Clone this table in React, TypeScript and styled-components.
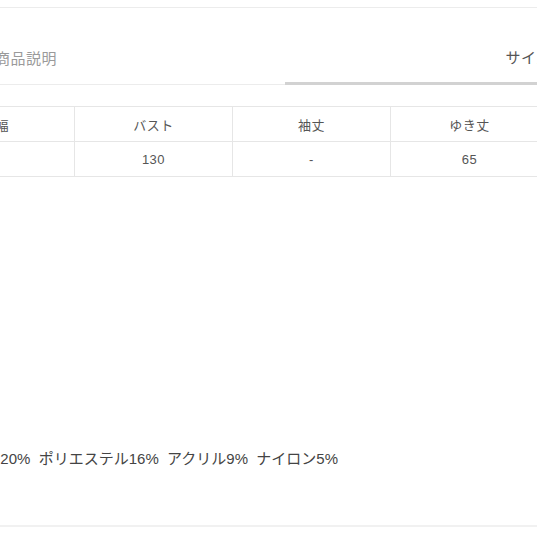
import React from 'react';
import styled, {createGlobalStyle} from 'styled-components';

const GlobalStyle = createGlobalStyle`
  html, body {
    margin: 0;
    padding: 0;
    background: #fff;
  }
  body {
    font-family: "Liberation Sans", "Noto Sans CJK JP", sans-serif;
    color: #555;
  }
`

const Viewport = styled.div`
  width: 537px;
  height: 537px;
  overflow: hidden;
`

// the page is scrolled sideways, so the content starts left of the window
const Content = styled.div`
  width: 1036px;
  margin-left: -233px;
  padding-top: 7px;
`

const Divider = styled.div<{ $size?: number }>`
  height: ${p => p.$size || 1}px;
  background: ${p => (p.$size || 1) > 1 ? '#f1f1f1' : '#ececec'};
`

const Tabs = styled.div`
  display: grid;
  grid-template-columns: 518px 518px;
`

const Tab = styled.div<{ $active?: boolean }>`
  height: 77px;
  box-sizing: border-box;
  display: flex;
  align-items: center;
  justify-content: center;
  padding-top: 22px;
  font-family: "Noto Sans CJK JP", sans-serif;
  font-size: 15px;
  letter-spacing: 0.5px;
  color: ${p => p.$active ? '#555' : '#9a9a9a'};
  border-bottom: ${p => p.$active ? '3px solid #d2d2d2' : '1px solid #ececec'};
`

const SizeTable = styled.table`
  margin: 21px 0 0 149px;
  border-collapse: collapse;
  table-layout: fixed;
  width: 790px;
  font-size: 13px;
  color: #555;
`

const Cell = styled.td`
  width: 158px;
  height: 35px;
  box-sizing: border-box;
  padding: 0;
  text-align: center;
  letter-spacing: 0.5px;
  border: 1px solid #e6e6e6;
`

const Material = styled.p`
  margin: 272px 0 0 120px;
  font-size: 15px;
  color: #444;
  white-space: pre;
  line-height: 20px;
`

const Footer = styled.div`
  margin-top: 56px;
`

const headers = ['肩幅', 'バスト', '袖丈', 'ゆき丈', '着丈'];
const values = ['', '130', '-', '65', '70'];

const App = () => {
    return (
        <Viewport>
            <GlobalStyle/>
            <Content>
                <Divider/>
                <Tabs>
                    <Tab>商品説明</Tab>
                    <Tab $active>サイズ情報</Tab>
                </Tabs>
                <SizeTable>
                    <tbody>
                    <tr>{headers.map(h => <Cell key={h}>{h}</Cell>)}</tr>
                    <tr>{values.map((v, i) => <Cell key={i}>{v}</Cell>)}</tr>
                    </tbody>
                </SizeTable>
                <Material>{'毛50%  レーヨン20%  ポリエステル16%  アクリル9%  ナイロン5%'}</Material>
                <Footer>
                    <Divider $size={2}/>
                </Footer>
            </Content>
        </Viewport>
    );
}

export default App;
